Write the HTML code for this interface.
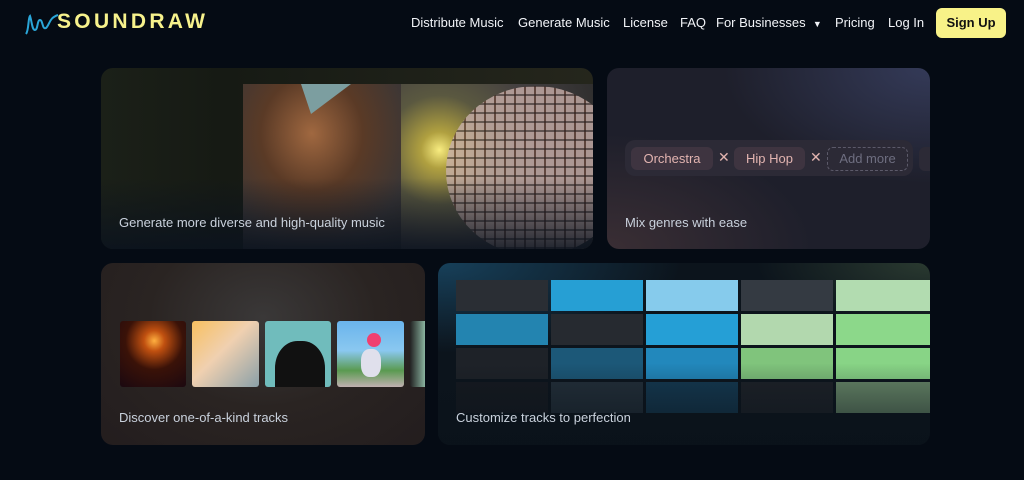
<!DOCTYPE html>
<html><head><meta charset="utf-8"><style>
*{margin:0;padding:0;box-sizing:border-box}
body{width:1024px;height:480px;background:#050b14;font-family:"Liberation Sans",sans-serif;position:relative;overflow:hidden;color:#fff}
.nav a{position:absolute;top:15px;font-size:13px;color:#f2f4f8;white-space:nowrap}
.card{position:absolute;border-radius:12px;overflow:hidden}
.cap{position:absolute;font-size:13px;color:#c9d1dc}
.cell{position:absolute;width:92px;height:31px}
</style></head><body>
<svg style="position:absolute;left:24px;top:12px" width="36" height="24" viewBox="0 0 36 24"><path d="M2 22 C5 18 4 6 6 4 C8 10 8 18 11 18 C14 18 13 8 16 8 C19 8 18 18 22 16 C26 12 25 6 34 3" stroke="#2aa6d8" stroke-width="2" fill="none"/></svg>
<div style="position:absolute;left:57px;top:10px;font-size:21px;font-weight:bold;letter-spacing:3.3px;color:#f7f28c">SOUNDRAW</div>
<div class="nav">
<a style="left:411px">Distribute Music</a>
<a style="left:518px">Generate Music</a>
<a style="left:623px">License</a>
<a style="left:680px">FAQ</a>
<a style="left:716px">For Businesses &nbsp;<span style="font-size:9px">▼</span></a>
<a style="left:835px">Pricing</a>
<a style="left:888px">Log In</a>
</div>
<div style="position:absolute;left:936px;top:8px;width:70px;height:30px;background:#f8f288;border-radius:6px;color:#111;font-size:13px;font-weight:bold;text-align:center;line-height:30px">Sign Up</div>

<div class="card" style="left:101px;top:68px;width:492px;height:181px;background:linear-gradient(90deg,#1b2018 0%,#161a14 25%,#25261c 100%)">
<div style="position:absolute;left:142px;top:16px;width:172px;height:165px;background:radial-gradient(ellipse at 40% 30%,#a06840 0%,#5a3a26 35%,#3a3636 70%,#2a2a2a 100%)"></div>
<div style="position:absolute;left:200px;top:16px;width:50px;height:30px;background:#7c9ea0;clip-path:polygon(0 0,100% 0,20% 100%)"></div>
<div style="position:absolute;left:300px;top:16px;width:192px;height:165px;background:radial-gradient(circle at 20% 40%,#f8ec80 0%,#b0a040 10%,#5a5840 30%,#444040 55%,#2a2a2a 100%)"></div>
<div style="position:absolute;left:345px;top:18px;width:180px;height:170px;border-radius:50%;background:repeating-linear-gradient(0deg,transparent 0 7px,rgba(40,30,30,.6) 7px 9px),repeating-linear-gradient(90deg,#c8b0aa 0 8px,#6a4a40 8px 10px);opacity:.8"></div>
<div style="position:absolute;left:0;top:110px;width:492px;height:71px;background:linear-gradient(180deg,transparent,rgba(10,18,30,.85))"></div>
<div class="cap" style="left:18px;top:147px">Generate more diverse and high-quality music</div>
</div>

<div class="card" style="left:607px;top:68px;width:323px;height:181px;background:radial-gradient(ellipse at 100% 0%,#343a58 0%,transparent 45%),radial-gradient(ellipse at 0% 100%,#3a2e34 0%,transparent 45%),#1e1f2b">
<div style="position:absolute;left:18px;top:72px;width:288px;height:36px;border-radius:10px;background:#2c2a36"></div>
<div style="position:absolute;left:24px;top:79px;width:82px;height:23px;border-radius:6px;background:#3e3440;color:#e2b4b0;font-size:13px;text-align:center;line-height:23px">Orchestra</div>
<div style="position:absolute;left:111px;top:81px;color:#e2b4b0;font-size:14px">✕</div>
<div style="position:absolute;left:127px;top:79px;width:71px;height:23px;border-radius:6px;background:#3e3440;color:#e2b4b0;font-size:13px;text-align:center;line-height:23px">Hip Hop</div>
<div style="position:absolute;left:203px;top:81px;color:#e2b4b0;font-size:14px">✕</div>
<div style="position:absolute;left:220px;top:79px;width:81px;height:24px;border-radius:6px;border:1px dashed #5c5a6a;color:#6e6e80;font-size:13px;text-align:center;line-height:22px">Add more</div>
<div style="position:absolute;left:312px;top:79px;width:20px;height:24px;border-radius:6px;background:#2c2a36"></div>
<div class="cap" style="left:18px;top:147px">Mix genres with ease</div>
</div>

<div class="card" style="left:101px;top:263px;width:324px;height:182px;background:radial-gradient(ellipse at 50% 30%,#3a3838 0%,#2a2422 50%,#231d1e 100%)">
<div style="position:absolute;left:19px;top:58px;width:66px;height:66px;border-radius:3px;background:radial-gradient(circle at 52% 30%,#ffb040 0%,#c05010 18%,#3a1208 50%,#1a0810 100%)"></div>
<div style="position:absolute;left:91px;top:58px;width:67px;height:66px;border-radius:3px;background:linear-gradient(135deg,#f8c060 0%,#f0d0b0 45%,#8aa0a8 100%)"></div>
<div style="position:absolute;left:164px;top:58px;width:66px;height:66px;border-radius:3px;background:#70bcbc;overflow:hidden"><div style="position:absolute;left:10px;top:20px;width:50px;height:60px;border-radius:45% 45% 0 0;background:#111"></div></div>
<div style="position:absolute;left:236px;top:58px;width:67px;height:66px;border-radius:3px;background:linear-gradient(180deg,#6ab4ec 0%,#8ac8f0 45%,#5a9a50 75%,#c0b0b0 100%)"><div style="position:absolute;left:30px;top:12px;width:14px;height:14px;border-radius:50%;background:#f04070"></div><div style="position:absolute;left:24px;top:28px;width:20px;height:28px;background:#e0e0ec;border-radius:40%"></div></div>
<div style="position:absolute;left:309px;top:58px;width:15px;height:66px;border-radius:3px 0 0 3px;background:linear-gradient(90deg,#222,#8ab4a0)"></div>
<div class="cap" style="left:18px;top:147px">Discover one-of-a-kind tracks</div>
</div>

<div class="card" style="left:438px;top:263px;width:492px;height:182px;background:radial-gradient(ellipse at 0% 0%,#17405a 0%,transparent 35%),radial-gradient(ellipse at 100% 0%,#2a3a30 0%,transparent 25%),#0c141c">
<div class="cell" style="left:18px;top:17px;background:#2a2e34"></div>
<div class="cell" style="left:113px;top:17px;background:#269fd4"></div>
<div class="cell" style="left:208px;top:17px;background:#86cbec"></div>
<div class="cell" style="left:303px;top:17px;background:#343a42"></div>
<div class="cell" style="left:398px;top:17px;width:94px;background:#b2dcb0"></div>
<div class="cell" style="left:18px;top:51px;background:#2384b0"></div>
<div class="cell" style="left:113px;top:51px;background:#262a30"></div>
<div class="cell" style="left:208px;top:51px;background:#259fd6"></div>
<div class="cell" style="left:303px;top:51px;background:#b2d8ae"></div>
<div class="cell" style="left:398px;top:51px;width:94px;background:#8cd88a"></div>
<div class="cell" style="left:18px;top:85px;background:#1e2228"></div>
<div class="cell" style="left:113px;top:85px;background:#1c5878"></div>
<div class="cell" style="left:208px;top:85px;background:#2288bc"></div>
<div class="cell" style="left:303px;top:85px;background:#80c47c"></div>
<div class="cell" style="left:398px;top:85px;width:94px;background:#88d486"></div>
<div class="cell" style="left:18px;top:119px;background:#161a20"></div>
<div class="cell" style="left:113px;top:119px;background:#24303a"></div>
<div class="cell" style="left:208px;top:119px;background:#153a52"></div>
<div class="cell" style="left:303px;top:119px;background:#1e2228"></div>
<div class="cell" style="left:398px;top:119px;width:94px;background:#6a8a6a"></div>
<div style="position:absolute;left:0;top:100px;width:492px;height:82px;background:linear-gradient(180deg,transparent,rgba(10,18,26,.75))"></div>
<div class="cap" style="left:18px;top:147px">Customize tracks to perfection</div>
</div>
</body></html>
